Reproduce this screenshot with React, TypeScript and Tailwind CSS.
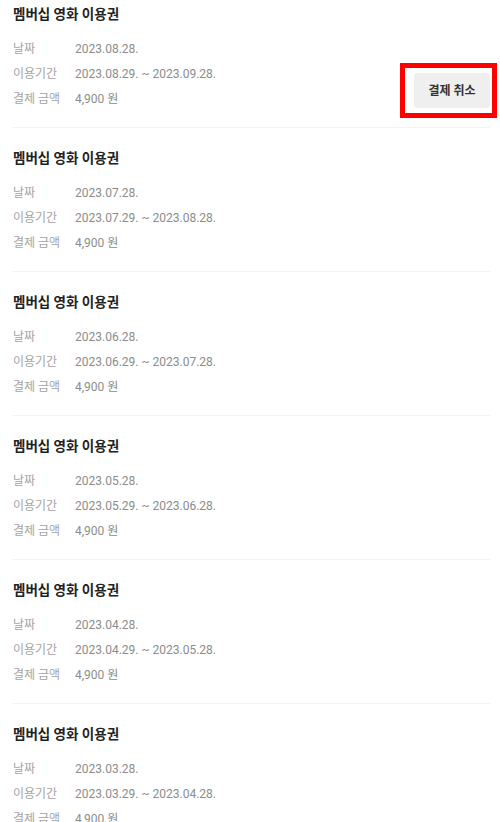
import React from "react";

const items = [
  { date: "2023.08.28.", from: "2023.08.29.", to: "2023.09.28.", cancel: true },
  { date: "2023.07.28.", from: "2023.07.29.", to: "2023.08.28." },
  { date: "2023.06.28.", from: "2023.06.29.", to: "2023.07.28." },
  { date: "2023.05.28.", from: "2023.05.29.", to: "2023.06.28." },
  { date: "2023.04.28.", from: "2023.04.29.", to: "2023.05.28." },
  { date: "2023.03.28.", from: "2023.03.29.", to: "2023.04.28." },
];

function Row({ label, value }: { label: string; value: string }) {
  return (
    <div className="flex h-[25px] items-center">
      <span className="w-[62px] shrink-0 text-[12px] text-[#a3a3a3]">{label}</span>
      <span className="text-[12px] text-[#8c8c8c]">{value}</span>
    </div>
  );
}

export default function App() {
  return (
    <div
      className="h-[822px] w-[500px] overflow-hidden bg-white pl-[13px] pr-[10px]"
      style={{ fontFamily: 'Roboto, "Noto Sans CJK KR", sans-serif' }}
    >
      {items.map((it, i) => (
        <div
          key={i}
          className={
            (i === 0 ? "pt-[3px] " : "pt-[19px] ") +
            "border-b border-[#f2f2f2] pb-[16px]"
          }
        >
          <div className="h-[22px] text-[13.5px] font-bold leading-[22px] text-[#222222]">
            멤버십 영화 이용권
          </div>
          <div className="mt-[11px] flex items-end justify-between">
            <div>
              <Row label="날짜" value={it.date} />
              <Row label="이용기간" value={`${it.from} ~ ${it.to}`} />
              <Row label="결제 금액" value="4,900 원" />
            </div>
            {it.cancel && (
              <div className="relative mb-[3px]">
                <button className="flex h-[35px] w-[76px] items-center justify-center rounded-[3px] bg-[#efefef] text-[12px] font-bold text-[#333333]">
                  결제 취소
                </button>
                <span className="pointer-events-none absolute -bottom-[10px] -left-[14px] -right-[7px] -top-[10px] border-[5px] border-[#ff0000]" />
              </div>
            )}
          </div>
        </div>
      ))}
    </div>
  );
}
